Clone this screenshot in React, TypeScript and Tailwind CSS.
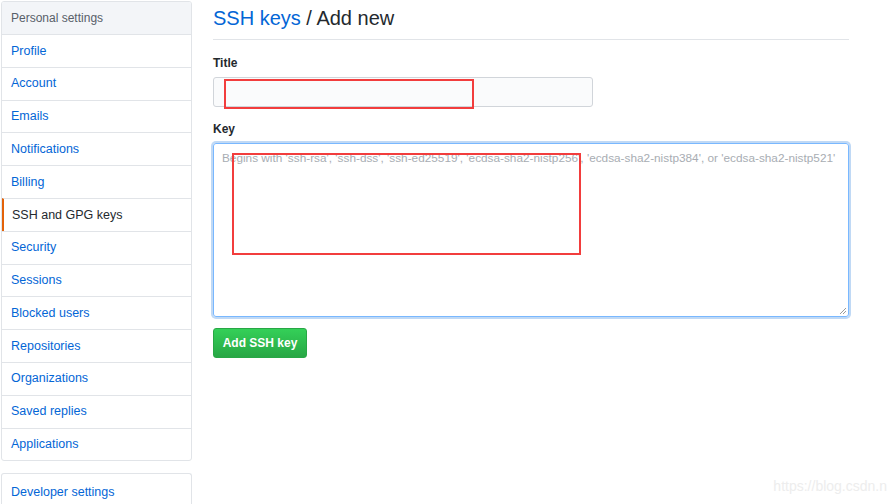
import React from 'react';

const menuItems = [
  'Profile',
  'Account',
  'Emails',
  'Notifications',
  'Billing',
  'SSH and GPG keys',
  'Security',
  'Sessions',
  'Blocked users',
  'Repositories',
  'Organizations',
  'Saved replies',
  'Applications',
];

const placeholder =
  "Begins with 'ssh-rsa', 'ssh-dss', 'ssh-ed25519', 'ecdsa-sha2-nistp256', 'ecdsa-sha2-nistp384', or 'ecdsa-sha2-nistp521'";

const Sidebar = (): React.JSX.Element => (
  <div className="flex w-[192px] shrink-0 flex-col gap-[12px] pt-px pl-px">
    <nav className="flex shrink-0 flex-col overflow-hidden rounded-[3px] border border-[#e1e4e8]">
      <div className="flex h-[32px] shrink-0 items-center bg-[#f3f5f8] px-[9px] text-[12px] text-[#586069]">
        Personal settings
      </div>
      {menuItems.map((item) => {
        const active = item === 'SSH and GPG keys';
        return (
          <div
            key={item}
            className={
              active
                ? 'flex h-[32.8px] shrink-0 items-center border-t border-l-2 border-t-[#e1e4e8] border-l-[#e36209] pl-[8px] text-[12.5px] text-[#24292e]'
                : 'flex h-[32.8px] shrink-0 items-center border-t border-[#e1e4e8] px-[9px] text-[12.5px] text-[#0366d6]'
            }
          >
            {item}
          </div>
        );
      })}
    </nav>
    <div className="flex h-[40px] shrink-0 items-start rounded-t-[3px] border border-b-0 border-[#e1e4e8] px-[9px] pt-[9px] text-[12.5px] text-[#0366d6]">
      Developer settings
    </div>
  </div>
);

export default function App(): React.JSX.Element {
  return (
    <div className="relative flex h-[504px] w-[889px] gap-[21px] overflow-hidden bg-white font-['Liberation_Sans',Arial,sans-serif]">
      <Sidebar />
      <main className="flex w-[636px] flex-col">
        <div className="flex h-[40px] items-center border-b border-[#e1e4e8] pb-[4px] text-[20px]">
          <span className="text-[#0366d6]">SSH keys</span>
          <span className="text-[#24292e]">&nbsp;/ Add new</span>
        </div>

        <label className="mt-[16px] text-[12px] leading-[15px] font-bold text-[#24292e]">Title</label>
        <div className="relative mt-[6px] h-[30px] w-[380px] rounded-[3px] border border-[#d1d5da] bg-[#fafbfc]">
          <div className="absolute top-[1px] left-[10px] h-[30px] w-[250px] border-2 border-[#f23d3d]" />
        </div>

        <label className="mt-[15px] text-[12px] leading-[15px] font-bold text-[#24292e]">Key</label>
        <div className="relative mt-[6px] h-[174px] w-[636px] rounded-[3px] border border-[#79b8ff] shadow-[0_0_0_2px_rgba(3,102,214,0.25)]">
          <div className="px-[8px] pt-[6px] text-[11.8px] whitespace-nowrap text-[#a8adb3]">{placeholder}</div>
          <div className="absolute top-[9px] left-[18px] h-[102px] w-[349px] border-2 border-[#f23d3d]" />
          <svg className="absolute right-[1px] bottom-[1px]" width="8" height="8" viewBox="0 0 8 8">
            <path d="M7 1 L1 7 M7 4 L4 7" stroke="#9a9a9a" strokeWidth="1" />
          </svg>
        </div>

        <button className="mt-[11px] h-[30px] w-[94px] rounded-[3px] border border-[#28a745] bg-gradient-to-b from-[#34d058] to-[#28a745] text-[12px] font-bold text-white">
          Add SSH key
        </button>
      </main>
      <div className="absolute right-[2px] bottom-[7px] text-[14px] text-[#ededed]">https://blog.csdn.n</div>
    </div>
  );
}
